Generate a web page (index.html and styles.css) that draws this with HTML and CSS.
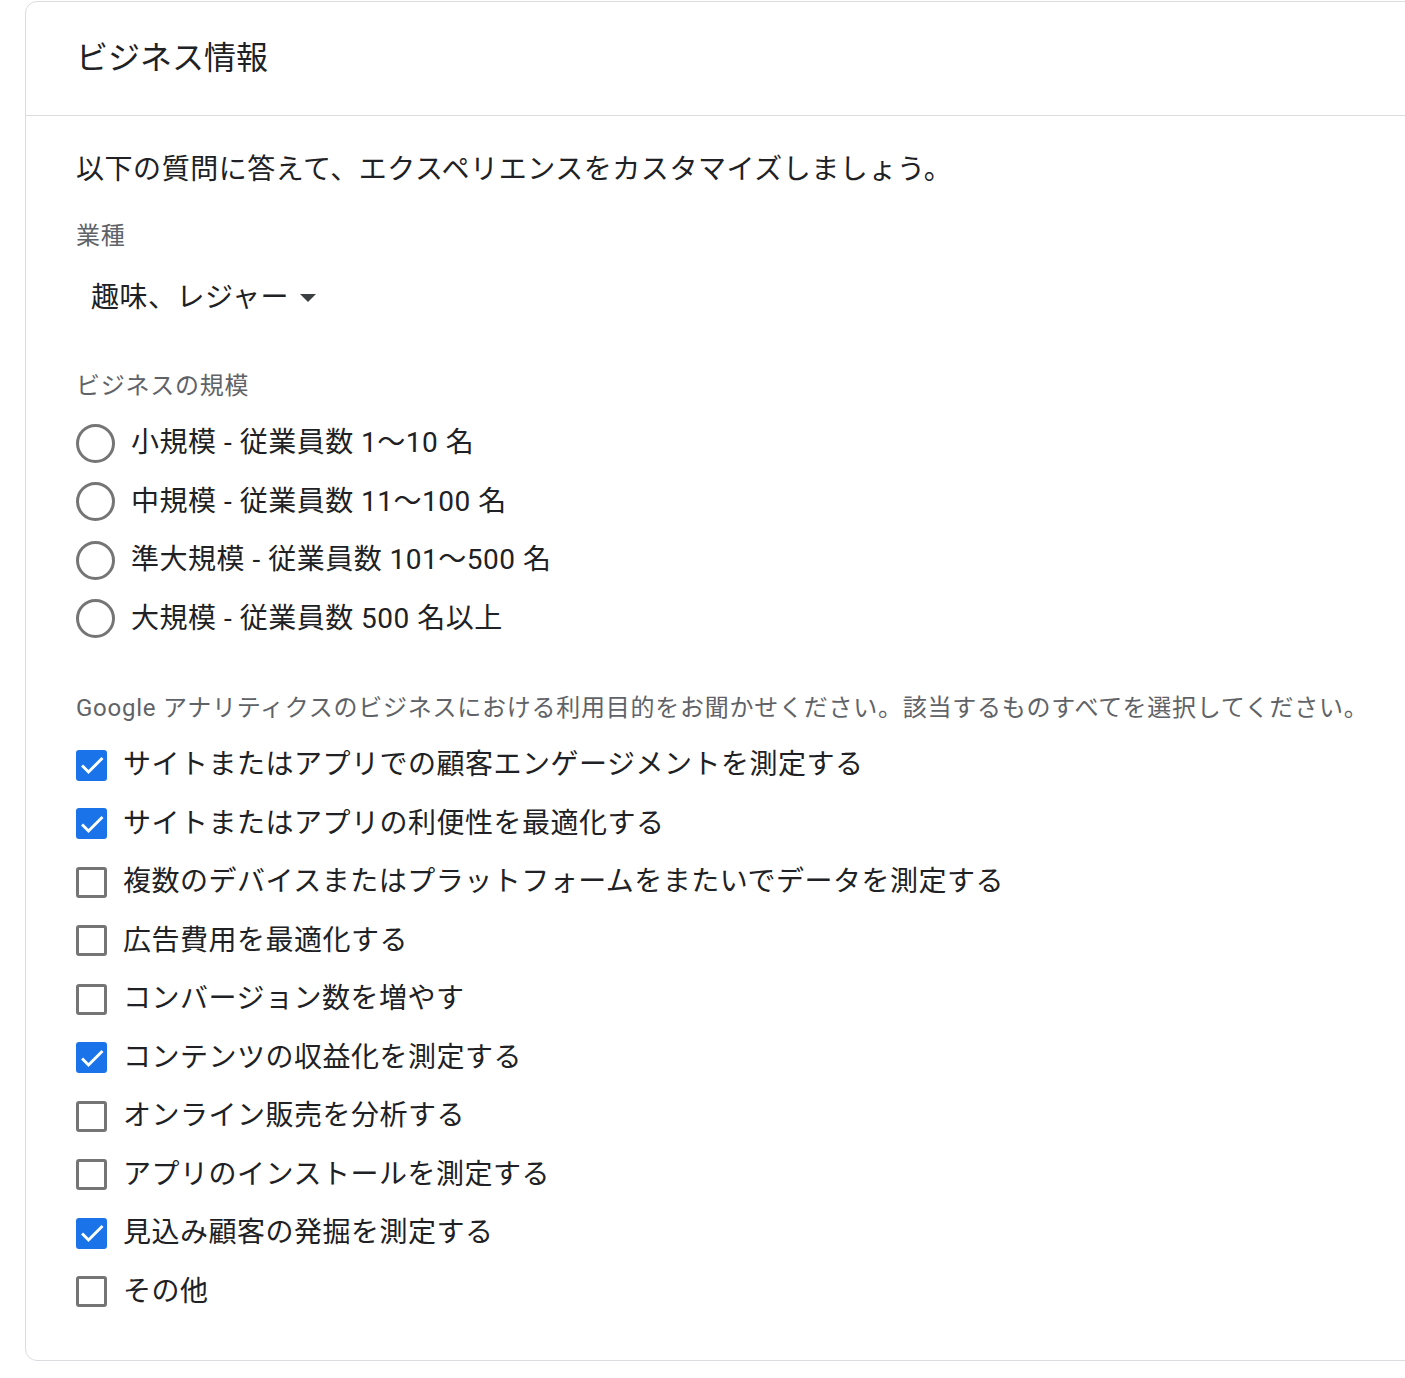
FILE: index.html
```html
<!DOCTYPE html>
<html lang="ja">
  <head>
    <meta charset="utf-8">
    <title>ビジネス情報</title>
    <link rel="stylesheet" href="styles.css">
  </head>
  <body>
    <div class="card">
      <div class="card-header">
        <h2 class="card-title">ビジネス情報</h2>
      </div>

      <div class="card-body">
        <p class="intro">以下の質問に答えて、エクスペリエンスをカスタマイズしましょう。</p>

        <div class="field-label label-industry">業種</div>
        <div class="dropdown">
          <span class="dropdown-value">趣味、レジャー</span>
          <span class="dropdown-arrow"></span>
        </div>

        <div class="field-label label-size">ビジネスの規模</div>
        <div class="radio-group">
          <label class="option">
            <input type="radio" name="size">
            <span class="radio"></span>
            <span class="option-text">小規模 - 従業員数 1～10 名</span>
          </label>
          <label class="option">
            <input type="radio" name="size">
            <span class="radio"></span>
            <span class="option-text">中規模 - 従業員数 11～100 名</span>
          </label>
          <label class="option">
            <input type="radio" name="size">
            <span class="radio"></span>
            <span class="option-text">準大規模 - 従業員数 101～500 名</span>
          </label>
          <label class="option">
            <input type="radio" name="size">
            <span class="radio"></span>
            <span class="option-text">大規模 - 従業員数 500 名以上</span>
          </label>
        </div>

        <div class="field-label label-usage">Google アナリティクスのビジネスにおける利用目的をお聞かせください。該当するものすべてを選択してください。</div>
        <div class="check-group">
          <label class="option">
            <input type="checkbox" checked>
            <span class="box"><svg viewBox="0 0 24 24"><path d="M3.5 12.5l5.5 5.5 12-12"/></svg></span>
            <span class="option-text">サイトまたはアプリでの顧客エンゲージメントを測定する</span>
          </label>
          <label class="option">
            <input type="checkbox" checked>
            <span class="box"><svg viewBox="0 0 24 24"><path d="M3.5 12.5l5.5 5.5 12-12"/></svg></span>
            <span class="option-text">サイトまたはアプリの利便性を最適化する</span>
          </label>
          <label class="option">
            <input type="checkbox">
            <span class="box"><svg viewBox="0 0 24 24"><path d="M3.5 12.5l5.5 5.5 12-12"/></svg></span>
            <span class="option-text">複数のデバイスまたはプラットフォームをまたいでデータを測定する</span>
          </label>
          <label class="option">
            <input type="checkbox">
            <span class="box"><svg viewBox="0 0 24 24"><path d="M3.5 12.5l5.5 5.5 12-12"/></svg></span>
            <span class="option-text">広告費用を最適化する</span>
          </label>
          <label class="option">
            <input type="checkbox">
            <span class="box"><svg viewBox="0 0 24 24"><path d="M3.5 12.5l5.5 5.5 12-12"/></svg></span>
            <span class="option-text">コンバージョン数を増やす</span>
          </label>
          <label class="option">
            <input type="checkbox" checked>
            <span class="box"><svg viewBox="0 0 24 24"><path d="M3.5 12.5l5.5 5.5 12-12"/></svg></span>
            <span class="option-text">コンテンツの収益化を測定する</span>
          </label>
          <label class="option">
            <input type="checkbox">
            <span class="box"><svg viewBox="0 0 24 24"><path d="M3.5 12.5l5.5 5.5 12-12"/></svg></span>
            <span class="option-text">オンライン販売を分析する</span>
          </label>
          <label class="option">
            <input type="checkbox">
            <span class="box"><svg viewBox="0 0 24 24"><path d="M3.5 12.5l5.5 5.5 12-12"/></svg></span>
            <span class="option-text">アプリのインストールを測定する</span>
          </label>
          <label class="option">
            <input type="checkbox" checked>
            <span class="box"><svg viewBox="0 0 24 24"><path d="M3.5 12.5l5.5 5.5 12-12"/></svg></span>
            <span class="option-text">見込み顧客の発掘を測定する</span>
          </label>
          <label class="option">
            <input type="checkbox">
            <span class="box"><svg viewBox="0 0 24 24"><path d="M3.5 12.5l5.5 5.5 12-12"/></svg></span>
            <span class="option-text">その他</span>
          </label>
        </div>
      </div>
    </div>
  </body>
</html>
```

FILE: styles.css
```css
body {
  margin: 0;
  padding: 0;
  overflow: hidden;
  background: #ffffff;
  color: #202124;
  font-family: Roboto, "Noto Sans CJK JP", sans-serif;
}

.card {
  margin-top: 1px;
  margin-left: 25px;
  width: 1500px; /* runs past the right edge of the window */
  height: 1360px;
  box-sizing: border-box;
  border: 1px solid #dadce0;
  border-radius: 12px;
}

.card-header {
  height: 114px;
  box-sizing: border-box;
  padding: 36px 50px 0 50px;
  border-bottom: 1px solid #dadce0;
}

.card-title {
  margin: 0;
  font-size: 32px;
  font-weight: 400;
  line-height: 40px;
}

.card-body {
  padding: 34px 50px 0 50px;
}

.intro {
  margin: 0;
  font-size: 28px;
  line-height: 40px;
  letter-spacing: 0.55px;
}

.field-label {
  font-size: 24px;
  line-height: 32px;
  letter-spacing: 0.75px;
  color: #5f6368;
}

.label-industry { margin-top: 30px; }
.label-size     { margin-top: 52px; }
.label-usage    { margin-top: 44px; }

.dropdown {
  display: flex;
  align-items: center;
  margin-top: 26px;
  padding-left: 15px;
  height: 40px;
}

.dropdown-value {
  font-size: 28px;
  line-height: 40px;
  letter-spacing: 0.5px;
}

.dropdown-arrow {
  margin-left: 11px;
  width: 0;
  height: 0;
  border-left: 8px solid transparent;
  border-right: 8px solid transparent;
  border-top: 8px solid #3c4043;
}

.radio-group,
.check-group {
  margin-top: 12px;
}

.option {
  display: flex;
  align-items: center;
  height: 58.5px;
}

.option input {
  display: none;
}

.option-text {
  font-size: 28px;
  line-height: 40px;
  letter-spacing: 0.5px;
  margin-left: 16px;
}

.radio {
  width: 39px;
  height: 39px;
  box-sizing: border-box;
  border: 3.5px solid #757575;
  border-radius: 50%;
}

.box {
  display: flex;
  align-items: center;
  justify-content: center;
  width: 31px;
  height: 31px;
  box-sizing: border-box;
  border: 3.5px solid #757575;
  border-radius: 3px;
}

.box svg {
  flex: none;
  width: 28px;
  height: 28px;
  fill: none;
  stroke: #ffffff;
  stroke-width: 2.5;
  visibility: hidden;
}

.option input:checked + .box {
  background: #1a73e8;
  border-color: #1a73e8;
}

.option input:checked + .box svg {
  visibility: visible;
}
```
